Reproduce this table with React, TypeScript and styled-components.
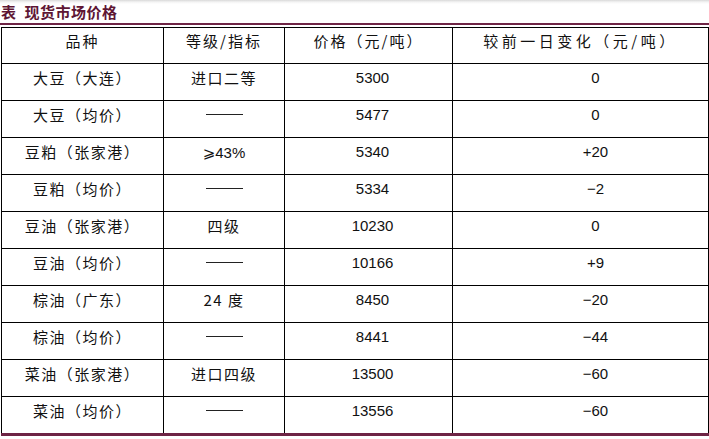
import styled, { createGlobalStyle } from 'styled-components';

const GlobalStyle = createGlobalStyle`
    html, body {
        margin: 0;
        padding: 0;
        background: #fff;
    }
`;

const Page = styled.div`
    width: 709px;
    height: 439px;
    overflow: hidden;
    background: linear-gradient(#d9d9d9 0, #f4f4f4 2px, #fff 4px);
    font-family: 'Noto Sans CJK SC', sans-serif;
    color: #111;
`;

const Caption = styled.div`
    height: 25px;
    box-sizing: border-box;
    padding: 2px 0 0 1px;
    border-bottom: 2px solid #6e2445;
    font-size: 15px;
    line-height: 20px;
    font-weight: 700;
    color: #5e1634;
    letter-spacing: 0.5px;

    span {
        margin-right: 8px;
    }
`;

const Table = styled.table`
    margin: 2px 0 0 1px;
    width: 707px;
    border-collapse: collapse;
    table-layout: fixed;
    border-bottom: 3px solid #6e2445;
`;

const Head = styled.th<{ $spacing?: number }>`
    height: 36px;
    box-sizing: border-box;
    border: 1px solid #000;
    padding: 3px 0 0;
    vertical-align: top;
    font-size: 15px;
    line-height: 20px;
    font-weight: 400;
    letter-spacing: ${p => p.$spacing ?? 2}px;
    white-space: nowrap;
`;

const Cell = styled.td<{ $num?: boolean; $shift?: number }>`
    height: 32px;
    box-sizing: content-box;
    border: 1px solid #000;
    padding: 4px 0 0 ${p => p.$shift ?? 0}px;
    vertical-align: top;
    text-align: center;
    font-family: ${p =>
        p.$num ? "'Liberation Sans', Arial, sans-serif" : "'Noto Sans CJK SC', sans-serif"};
    font-size: 15px;
    line-height: 20px;
    letter-spacing: ${p => (p.$num ? 0 : 1.5)}px;
    white-space: nowrap;
`;

const Dash = styled.span`
    display: inline-block;
    width: 37px;
    height: 1px;
    background: #222;
    vertical-align: middle;
    margin-top: -4px;
`;

const Geq = styled.span`
    font-family: 'DejaVu Sans', sans-serif;
    font-size: 15px;
`;

const Latin = styled.span`
    font-family: 'Liberation Sans', Arial, sans-serif;
    letter-spacing: 0;
`;

const Paren = styled.span`
    display: inline-block;
    width: 16.5px;
    text-align: left;
    letter-spacing: 0;
`;

type Row = { name: string; place: string; grade: string; price: string; change: string };

const L = '\uFF08';
const R = '\uFF09';

const rows: Row[] = [
    { name: '大豆', place: '大连', grade: '进口二等', price: '5300', change: '0' },
    { name: '大豆', place: '均价', grade: '-', price: '5477', change: '0' },
    { name: '豆粕', place: '张家港', grade: '>=43%', price: '5340', change: '+20' },
    { name: '豆粕', place: '均价', grade: '-', price: '5334', change: '−2' },
    { name: '豆油', place: '张家港', grade: '四级', price: '10230', change: '0' },
    { name: '豆油', place: '均价', grade: '-', price: '10166', change: '+9' },
    { name: '棕油', place: '广东', grade: '24 度', price: '8450', change: '−20' },
    { name: '棕油', place: '均价', grade: '-', price: '8441', change: '−44' },
    { name: '菜油', place: '张家港', grade: '进口四级', price: '13500', change: '−60' },
    { name: '菜油', place: '均价', grade: '-', price: '13556', change: '−60' },
];

function Grade({ value }: { value: string }) {
    if (value === '-') return <Dash />;
    if (value === '>=43%')
        return (
            <Latin>
                <Geq>⩾</Geq>43%
            </Latin>
        );
    return <>{value}</>;
}

export default function App() {
    return (
        <Page>
            <GlobalStyle />
            <Caption>
                <span>表</span>现货市场价格
            </Caption>
            <Table>
                <colgroup>
                    <col style={{ width: 162 }} />
                    <col style={{ width: 121 }} />
                    <col style={{ width: 168 }} />
                    <col style={{ width: 256 }} />
                </colgroup>
                <thead>
                    <tr>
                        <Head>品种</Head>
                        <Head>等级/指标</Head>
                        <Head>价格{L}元/吨{R}</Head>
                        <Head $spacing={3.5}>较前一日变化{L}元/吨{R}</Head>
                    </tr>
                </thead>
                <tbody>
                    {rows.map(r => (
                        <tr key={r.name + r.place}>
                            <Cell>
                                {r.name}
                                {L}
                                {r.place}
                                <Paren>{R}</Paren>
                            </Cell>
                            <Cell>
                                <Grade value={r.grade} />
                            </Cell>
                            <Cell $num $shift={8}>
                                {r.price}
                            </Cell>
                            <Cell $num $shift={30}>
                                {r.change}
                            </Cell>
                        </tr>
                    ))}
                </tbody>
            </Table>
        </Page>
    );
}
